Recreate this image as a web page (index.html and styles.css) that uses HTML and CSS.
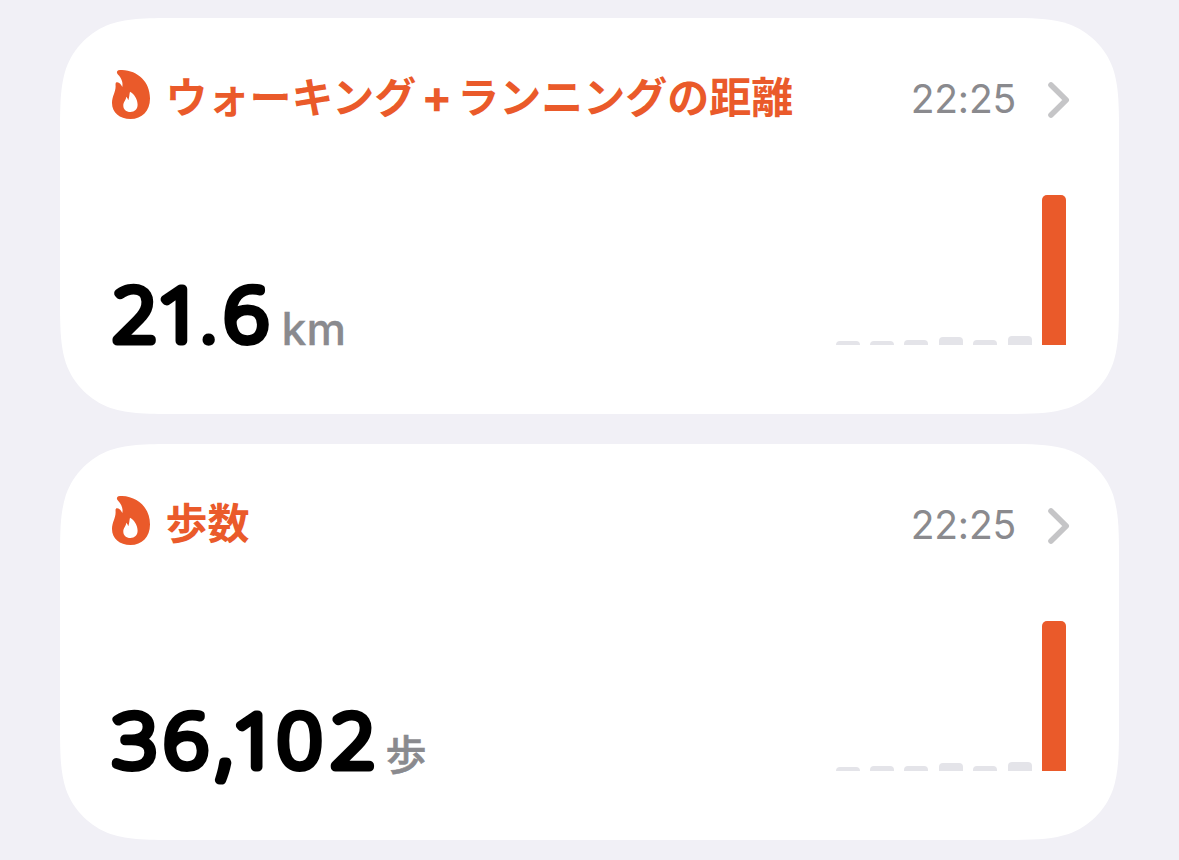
FILE: index.html
```html
<!DOCTYPE html>
<html lang="ja">
<head>
<meta charset="utf-8">
<title>ヘルスケア</title>
<link rel="stylesheet" href="styles.css">
</head>
<body>
<main class="cards">
  <section class="card">
    <header class="head">
      <svg class="flame" viewBox="0 0 40 50"><path fill-rule="evenodd" d="M5.900 2.300C6 .3 8 .1 11 .1C27 .7 39 12 39 28.500C39 41 31 49 19.500 49C8.500 49 1 42.500 1 33C1 26.500 4.600 22 4.600 16.500C4.600 14.500 4.200 12.600 5.600 12.200C8.400 11.800 10 14.500 11.300 17C12.300 12.500 10.400 8 6.900 4.500Q5.800 3.300 5.900 2.300ZM19 21.800C18.300 24.500 18.400 27.500 17.300 30.300C16.700 29 16.300 27.500 15.200 26.700C15.200 30 12.300 31.800 12.300 35.500C12.300 39.500 15.200 42 19.400 42C23.600 42 26.600 39 26.600 34.800C26.600 29.500 23.500 24.300 19 21.800Z"/></svg>
      <h2 class="title">ウォーキング<span class="plus">+</span>ランニングの距離</h2>
      <time class="time">22:25</time>
      <svg class="chevron" viewBox="0 0 24 38"><path d="M4 4L19.200 19L4 34"/></svg>
    </header>
    <div class="body">
      <div class="reading">
        <svg class="number number-km" viewBox="0 0 164 90"><text transform="scale(1.08 1)" x="1.7 43 80.8 104.6" y="69.500 69.500 72.700 69.500">21<tspan class="dot">.</tspan>6</text></svg>
        <span class="unit unit-km">km</span>
      </div>
      <div class="chart">
        <i class="bar b4"></i><i class="bar b4"></i><i class="bar b5"></i><i class="bar b8"></i><i class="bar b5"></i><i class="bar b9"></i><i class="bar today"></i>
      </div>
    </div>
  </section>
  <section class="card">
    <header class="head">
      <svg class="flame" viewBox="0 0 40 50"><path fill-rule="evenodd" d="M5.900 2.300C6 .3 8 .1 11 .1C27 .7 39 12 39 28.500C39 41 31 49 19.500 49C8.500 49 1 42.500 1 33C1 26.500 4.600 22 4.600 16.500C4.600 14.500 4.200 12.600 5.600 12.200C8.400 11.800 10 14.500 11.300 17C12.300 12.500 10.400 8 6.900 4.500Q5.800 3.300 5.900 2.300ZM19 21.800C18.300 24.500 18.400 27.500 17.300 30.300C16.700 29 16.300 27.500 15.200 26.700C15.200 30 12.300 31.800 12.300 35.500C12.300 39.500 15.200 42 19.400 42C23.600 42 26.600 39 26.600 34.800C26.600 29.500 23.500 24.300 19 21.800Z"/></svg>
      <h2 class="title">歩数</h2>
      <time class="time">22:25</time>
      <svg class="chevron" viewBox="0 0 24 38"><path d="M4 4L19.200 19L4 34"/></svg>
    </header>
    <div class="body">
      <div class="reading">
        <svg class="number number-steps" viewBox="0 0 268 90"><text transform="scale(1.08 1)" x="1.9 48.8 98 112.7 154.2 203.6" y="69.500 69.500 73.500 69.500 69.500 69.500">36,102</text></svg>
        <span class="unit unit-steps">歩</span>
      </div>
      <div class="chart">
        <i class="bar b4"></i><i class="bar b5"></i><i class="bar b5"></i><i class="bar b8"></i><i class="bar b5"></i><i class="bar b9"></i><i class="bar today"></i>
      </div>
    </div>
  </section>
</main>
</body>
</html>
```
FILE: styles.css
```css
* { box-sizing: border-box; }
body {
  margin: 0;
  height: 860px;
  overflow: hidden;
  background: #f1f0f6;
  font-family: Inter, "Noto Sans CJK JP", sans-serif;
}
.cards {
  display: flex;
  flex-direction: column;
  gap: 30px;
  padding: 18px 60px 20px;
}
.card {
  width: 1059px;
  height: 396px;
  padding: 51px 49px 69px 51px;
  display: flex;
  flex-direction: column;
  justify-content: space-between;
  background: #fff;
  /* continuous-curvature corners */
  clip-path: path("M0 122.300C0 87 0 69.500 6 50.500C13.500 29.800 29.800 13.500 50.500 6C69.500 0 87 0 122.300 0H936.700C972 0 989.500 0 1008.500 6C1029.200 13.500 1045.500 29.800 1053 50.500C1059 69.500 1059 87 1059 122.300V273.700C1059 309 1059 326.500 1053 345.500C1045.500 366.200 1029.200 382.500 1008.500 390C989.500 396 972 396 936.700 396H122.300C87 396 69.500 396 50.500 390C29.800 382.500 13.500 366.200 6 345.500C0 326.500 0 309 0 273.700Z");
}
.head {
  display: flex;
  align-items: center;
  height: 56px;
}
.flame {
  width: 40px;
  height: 50px;
  margin-top: -4px;
  fill: #ea5a2a;
}
.title {
  flex: 1;
  margin: -4px 0 0 14.500px;
  color: #ea5a2a;
  font: 700 42px/56px "Noto Sans CJK JP", sans-serif;
  white-space: nowrap;
}
.plus {
  display: inline-block;
  width: 41px;
  text-align: center;
  font-family: Inter, sans-serif;
  font-size: 46px;
  line-height: 40px;
  font-weight: 700;
}
.time {
  color: #8a8a8e;
  font-size: 39px;
  line-height: 56px;
  letter-spacing: -0.200px;
  margin: 4px 31px 0 0;
}
.chevron {
  width: 24px;
  height: 38px;
  margin: 6px -1px 0 0;
  fill: none;
  stroke: #c5c5c7;
  stroke-width: 5.600;
  stroke-linecap: round;
  stroke-linejoin: round;
}
.body {
  display: flex;
  justify-content: space-between;
  align-items: flex-end;
  padding-right: 4px;
}
.reading {
  display: flex;
  align-items: flex-end;
  height: 90px;
}
.number {
  height: 90px;
  margin-bottom: -16px;
  overflow: visible;
  font-family: "Noto Sans", sans-serif;
  font-size: 72px;
  font-weight: 100;
  stroke: #000;
  stroke-width: 9;
  stroke-linejoin: round;
}
.dot {
  font-weight: 400;
  stroke-width: 2.500;
}
.number-km { width: 164px; }
.number-steps { width: 268px; }
.unit {
  color: #8a8a8e;
  font-weight: 500;
  -webkit-text-stroke: 0.300px #8a8a8e;
}
.unit-km {
  margin: 0 0 -14px 6.500px;
  font-size: 44.500px;
  line-height: 60px;
}
.unit-steps {
  margin: 0 0 -11px 6.500px;
  font: 500 41px/60px "Noto Sans CJK JP", sans-serif;
  -webkit-text-stroke: 0.600px #8a8a8e;
}
.chart {
  display: flex;
  align-items: flex-end;
  gap: 10.400px;
}
.bar {
  width: 24px;
  border-radius: 4px 4px 0 0;
  background: #e4e4e9;
}
.b4 { height: 4px; }
.b5 { height: 5px; }
.b8 { height: 8px; }
.b9 { height: 9px; }
.today {
  height: 150px;
  border-radius: 5px 5px 0 0;
  background: #ea5a2a;
}
```
